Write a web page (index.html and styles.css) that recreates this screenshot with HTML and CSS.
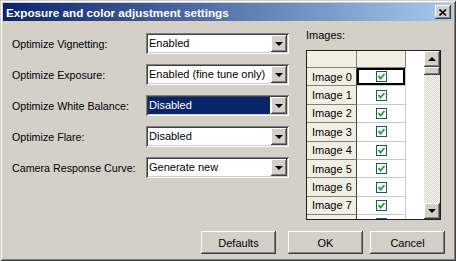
FILE: index.html
```html
<!DOCTYPE html>
<html lang="en">
<head>
<meta charset="UTF-8" />
<title>Exposure and color adjustment settings</title>
<link rel="stylesheet" href="styles.css">
</head>
<body>

<div class="window">
  <!-- TITLE BAR -->
  <div class="titlebar">
    <span class="title">Exposure and color adjustment settings</span>
    <button class="close raised" aria-label="Close">
      <svg width="8" height="7" viewBox="0 0 8 7"><path d="M0.5 0.5 L7 6.5 M7 0.5 L0.5 6.5" stroke="#000" stroke-width="1.6" fill="none"/></svg>
    </button>
  </div>

  <div class="body">
    <!-- OPTIONS -->
    <div class="options">
      <div class="row">
        <label>Optimize Vignetting:</label>
        <div class="combo"><span class="value">Enabled</span><span class="drop raised"><i class="arrow-down"></i></span></div>
      </div>
      <div class="row">
        <label>Optimize Exposure:</label>
        <div class="combo"><span class="value">Enabled (fine tune only)</span><span class="drop raised"><i class="arrow-down"></i></span></div>
      </div>
      <div class="row">
        <label>Optimize White Balance:</label>
        <div class="combo focus"><span class="value">Disabled</span><span class="drop raised"><i class="arrow-down"></i></span></div>
      </div>
      <div class="row">
        <label>Optimize Flare:</label>
        <div class="combo"><span class="value">Disabled</span><span class="drop raised"><i class="arrow-down"></i></span></div>
      </div>
      <div class="row">
        <label>Camera Response Curve:</label>
        <div class="combo"><span class="value">Generate new</span><span class="drop raised"><i class="arrow-down"></i></span></div>
      </div>
    </div>

    <!-- IMAGES GRID -->
    <div class="images">
      <div class="images-label">Images:</div>
      <div class="grid">
        <div class="table">
          <div class="trow head"><div class="rh"></div><div class="cc"></div></div>
          <div class="trow"><div class="rh">Image 0</div><div class="cc sel"><span class="check"></span></div></div>
          <div class="trow"><div class="rh">Image 1</div><div class="cc"><span class="check"></span></div></div>
          <div class="trow"><div class="rh">Image 2</div><div class="cc"><span class="check"></span></div></div>
          <div class="trow"><div class="rh">Image 3</div><div class="cc"><span class="check"></span></div></div>
          <div class="trow"><div class="rh">Image 4</div><div class="cc"><span class="check"></span></div></div>
          <div class="trow"><div class="rh">Image 5</div><div class="cc"><span class="check"></span></div></div>
          <div class="trow"><div class="rh">Image 6</div><div class="cc"><span class="check"></span></div></div>
          <div class="trow"><div class="rh">Image 7</div><div class="cc"><span class="check"></span></div></div>
          <div class="trow"><div class="rh">Image 8</div><div class="cc"><span class="check"></span></div></div>
        </div>
        <div class="blank"></div>
        <div class="vscroll">
          <span class="sbtn raised"><i class="arrow-up"></i></span>
          <span class="thumb raised"></span>
          <span class="track"></span>
          <span class="sbtn raised"><i class="arrow-down"></i></span>
        </div>
      </div>
    </div>
  </div>

  <!-- BUTTONS -->
  <div class="buttons">
    <button class="btn raised defaults">Defaults</button>
    <button class="btn raised">OK</button>
    <button class="btn raised">Cancel</button>
  </div>
</div>

</body>
</html>
```

FILE: styles.css
```css
* {
  box-sizing: border-box;
  margin: 0;
  padding: 0;
}
body {
  background: #d4d0c8;
  font: 11px "Liberation Sans", Arial, sans-serif;
  color: #000;
}
.window {
  width: 456px;
  height: 261px;
  padding: 3px;
  overflow: hidden;
  background: #d4d0c8;
  box-shadow: inset 1px 1px #d4d0c8, inset -1px -1px #404040,
              inset 2px 2px #fff, inset -2px -2px #808080;
}

/* shared 3D look */
.raised {
  background: #d4d0c8;
  border: none;
  box-shadow: inset -1px -1px #404040, inset 1px 1px #fff,
              inset -2px -2px #808080, inset 2px 2px #d4d0c8;
}
.arrow-down, .arrow-up {
  display: block;
  width: 0;
  height: 0;
  border-left: 4px solid transparent;
  border-right: 4px solid transparent;
}
.arrow-down { border-top: 4px solid #000; }
.arrow-up { border-bottom: 4px solid #000; }

/* TITLE BAR */
.titlebar {
  height: 18px;
  display: flex;
  align-items: center;
  justify-content: space-between;
  padding: 0 2px 0 3px;
  background: linear-gradient(to right, #0a246a, #a6caf0);
}
.title {
  color: #fff;
  font-weight: bold;
  font-size: 11.7px;
}
.close {
  width: 16px;
  height: 14px;
  display: flex;
  align-items: center;
  justify-content: center;
}

/* BODY */
.body {
  display: flex;
  padding-left: 9px;
}
.options {
  padding-top: 12px;
  display: flex;
  flex-direction: column;
  gap: 10px;
  font-size: 10.7px;
}
.row {
  display: flex;
  align-items: center;
}
.row label {
  width: 134px;
}
.combo {
  width: 143px;
  height: 21px;
  display: flex;
  padding: 2px;
  background: #fff;
  font-size: 11px;
  box-shadow: inset 1px 1px #808080, inset -1px -1px #fff,
              inset 2px 2px #404040, inset -2px -2px #d4d0c8;
}
.combo .value {
  flex: 1;
  padding-left: 1px;
  line-height: 17px;
  white-space: nowrap;
  overflow: hidden;
}
.combo.focus .value {
  background: #0a246a;
  color: #fff;
  margin-right: 1px;
}
.drop {
  width: 16px;
  height: 17px;
  display: flex;
  align-items: center;
  justify-content: center;
}

/* IMAGES */
.images {
  margin-left: 17px;
  padding-top: 8px;
}
.images-label {
  line-height: 13px;
  margin-bottom: 8px;
}
.grid {
  width: 135px;
  height: 170px;
  display: flex;
  border: 1px solid #202020;
  background: #fff;
  overflow: hidden;
}
.table {
  width: 99px;
}
.trow {
  display: flex;
  height: 18.4px;
}
.trow.head {
  height: 17px;
}
.rh {
  width: 50px;
  padding-left: 5px;
  display: flex;
  align-items: center;
  background: #f1efe2;
  border-right: 1px solid #404040;
  border-bottom: 1px solid #808080;
}
.cc {
  width: 49px;
  display: flex;
  align-items: center;
  justify-content: center;
  border-right: 1px solid #c8c8c8;
  border-bottom: 1px solid #c8c8c8;
}
.head .rh, .head .cc {
  background: #f1efe2;
  border-right-color: #808080;
  border-bottom-color: #808080;
}
.cc.sel {
  box-shadow: inset 0 0 0 2px #000;
}
.check {
  width: 11px;
  height: 11px;
  border: 1px solid #1c5180;
  background: #fff url("data:image/svg+xml;utf8,<svg xmlns='http://www.w3.org/2000/svg' width='9' height='9'><path d='M1.5 4 L3.5 6.5 L7.5 2' stroke='%2321a121' stroke-width='1.8' fill='none'/></svg>") center no-repeat;
}
.blank {
  width: 18px;
}
.vscroll {
  width: 16px;
  display: flex;
  flex-direction: column;
}
.sbtn {
  height: 16px;
  display: flex;
  align-items: center;
  justify-content: center;
}
.thumb {
  height: 8px;
}
.track {
  flex: 1;
  background: repeating-conic-gradient(#fff 0 25%, #d4d0c8 0 50%) 0 0 / 2px 2px;
}

/* BUTTONS */
.buttons {
  display: flex;
  justify-content: flex-end;
  gap: 7px;
  margin-top: 11px;
  padding-right: 8px;
}
.btn {
  width: 75px;
  height: 23px;
  font: 11px "Liberation Sans", Arial, sans-serif;
  color: #000;
}
.defaults {
  margin-right: 5px;
}
```
